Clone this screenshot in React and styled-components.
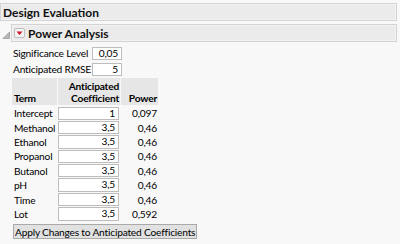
import React from 'react';
import styled, { createGlobalStyle } from 'styled-components';

const GlobalStyle = createGlobalStyle`
  html, body {
    margin: 0;
    padding: 0;
    background: #f8f8f8;
  }
  body {
    font-family: Lato, "Noto Sans", sans-serif;
    font-size: 10.2px;
    letter-spacing: -0.2px;
    color: #000;
  }
`;

const Page = styled.div`
  width: 400px;
  height: 244px;
  overflow: hidden;
  padding-top: 3px;
  box-sizing: border-box;
`;

const OutlineBar = styled.div`
  display: flex;
  align-items: center;
  height: 18px;
  margin-right: 3px;
  box-sizing: border-box;
  border: 1px solid #d3d3d3;
  background: #ebebeb;
  box-shadow: inset 0 0 0 1px #f2f2f2;
  font-weight: 700;
  font-size: 12px;
  letter-spacing: 0;
  color: #111;
  padding-left: 2px;
  gap: 3px;
  flex: ${(p) => (p.grow ? 1 : 'none')};
`;

const NodeRow = styled.div`
  display: flex;
  align-items: center;
  margin-top: 3px;
`;

const Disclosure = styled.svg`
  width: 11px;
  height: 18px;
  flex: none;
`;

const Content = styled.div`
  padding-left: 13px;
  padding-top: 4px;
`;

const ParamRow = styled.div`
  display: flex;
  align-items: center;
  height: 15px;
  margin-bottom: ${(p) => p.gap || 0}px;
`;

const Label = styled.span`
  width: 79px;
  line-height: 13px;
  white-space: nowrap;
`;

const Field = styled.div`
  width: 30px;
  height: 13px;
  box-sizing: border-box;
  background: #fff;
  border: 1px solid #bdbdbd;
  text-align: right;
  padding-right: 3px;
  line-height: 11px;
  white-space: nowrap;
`;

const Grid = styled.div`
  display: grid;
  grid-template-columns: 45px 62px 37px;
  column-gap: 1px;
  margin-top: 1px;
  margin-left: -1px;
  width: 145px;
`;

const HeadCell = styled.div`
  background: #e6e6e6;
  height: 27px;
  box-sizing: border-box;
  display: flex;
  flex-direction: column;
  justify-content: flex-end;
  align-items: ${(p) => (p.left ? 'flex-start' : 'flex-end')};
  padding: 0 1px 1px 2px;
  font-weight: 700;
  line-height: 12px;
  text-align: right;
  margin-bottom: 1px;
`;

const Cell = styled.div`
  height: 14.4px;
  display: flex;
  align-items: center;
  justify-content: ${(p) => (p.left ? 'flex-start' : 'flex-end')};
  padding: 0 ${(p) => (p.left ? 0 : 1)}px 0 ${(p) => (p.left ? 2 : 0)}px;
  white-space: nowrap;
`;

const CoefCell = styled.div`
  height: 14.4px;
  display: flex;
  align-items: center;
`;

const CoefBox = styled(Field)`
  width: 61px;
  height: 13.4px;
  line-height: 11.4px;
`;

const ApplyButton = styled.button`
  margin-top: 3px;
  height: 15px;
  box-sizing: border-box;
  padding: 0 1px;
  background: #e1e1e1;
  border: 1px solid #a9a9a9;
  font-family: Lato, "Noto Sans", sans-serif;
  font-size: 10.2px;
  letter-spacing: -0.2px;
  line-height: 12px;
  color: #000;
  white-space: nowrap;
`;

const rows = [
  ['Intercept', '1', '0,097'],
  ['Methanol', '3,5', '0,46'],
  ['Ethanol', '3,5', '0,46'],
  ['Propanol', '3,5', '0,46'],
  ['Butanol', '3,5', '0,46'],
  ['pH', '3,5', '0,46'],
  ['Time', '3,5', '0,46'],
  ['Lot', '3,5', '0,592'],
];

function MenuIcon() {
  return (
    <svg width="11" height="10" viewBox="0 0 11 10">
      <rect x="0.5" y="0.5" width="10" height="9" rx="1.5" fill="#f4f4f4" stroke="#bdbdbd" />
      <path d="M2.5 3.5 L8.5 3.5 L5.5 7 Z" fill="#d0142a" />
    </svg>
  );
}

export default function App() {
  return (
    <Page>
      <GlobalStyle />
      <OutlineBar>Design Evaluation</OutlineBar>
      <NodeRow>
        <Disclosure viewBox="0 0 11 18">
          <path d="M3 14.5 L9.5 14.5 L9.5 8 Z" fill="#b8b8b8" stroke="#9a9a9a" strokeWidth="0.8" />
        </Disclosure>
        <OutlineBar grow>
          <MenuIcon />
          Power Analysis
        </OutlineBar>
      </NodeRow>
      <Content>
        <ParamRow gap={1}>
          <Label>Significance Level</Label>
          <Field>0,05</Field>
        </ParamRow>
        <ParamRow>
          <Label>Anticipated RMSE</Label>
          <Field>5</Field>
        </ParamRow>
        <Grid>
          <HeadCell left>Term</HeadCell>
          <HeadCell>
            <span>Anticipated</span>
            <span>Coefficient</span>
          </HeadCell>
          <HeadCell>Power</HeadCell>
          {rows.map(([term, coef, power]) => (
            <React.Fragment key={term}>
              <Cell left>{term}</Cell>
              <CoefCell>
                <CoefBox>{coef}</CoefBox>
              </CoefCell>
              <Cell>{power}</Cell>
            </React.Fragment>
          ))}
        </Grid>
        <ApplyButton>Apply Changes to Anticipated Coefficients</ApplyButton>
      </Content>
    </Page>
  );
}
